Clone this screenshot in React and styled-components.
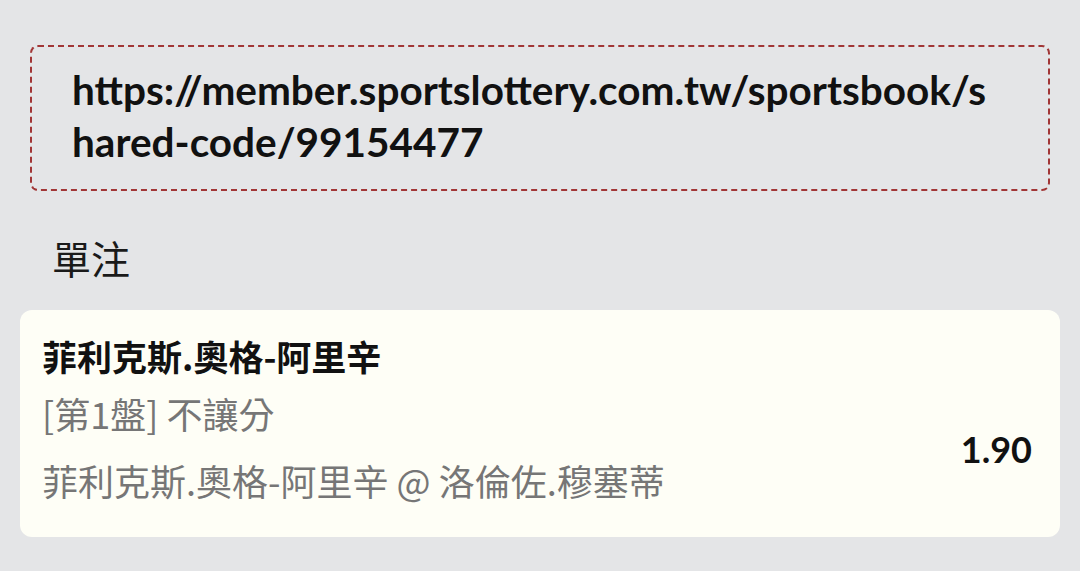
import React from 'react'
import styled, { createGlobalStyle } from 'styled-components'

const GlobalStyle = createGlobalStyle`
  html, body {
    margin: 0;
    padding: 0;
    background: #e4e5e7;
  }
  body {
    font-family: Lato, "Noto Sans CJK TC", sans-serif;
  }
`

const Page = styled.div`
  width: 1080px;
  height: 571px;
  box-sizing: border-box;
  padding: 45px 20px 0 20px;
  overflow: hidden;
`

const LinkBox = styled.div`
  margin: 0 10px;
  height: 146px;
  box-sizing: border-box;
  border: 2px dashed #a13636;
  border-radius: 8px;
  padding: 17px 56px 0 40px;
  font-family: Lato, sans-serif;
  font-weight: 700;
  font-size: 40.5px;
  line-height: 52px;
  color: #111;
  word-break: break-all;
`

const SectionTitle = styled.div`
  margin: 40px 0 0 32px;
  font-family: "Noto Sans CJK TC", sans-serif;
  font-size: 39px;
  line-height: 52px;
  color: #1a1a1a;
`

const Card = styled.div`
  margin-top: 27px;
  height: 227px;
  box-sizing: border-box;
  background: #fefef6;
  border-radius: 12px;
  padding: 21px 28px 0 22px;
  display: flex;
  align-items: flex-start;
`

const Info = styled.div`
  flex: 1;
  display: flex;
  flex-direction: column;
`

const Line = styled.div`
  font-family: "Noto Sans CJK TC", sans-serif;
  font-size: ${p => (p.strong ? 35 : 36)}px;
  line-height: 50px;
  margin-bottom: ${p => p.gap || 0}px;
  color: ${p => (p.strong ? '#111' : '#767676')};
  font-weight: ${p => (p.strong ? 700 : 400)};
`

const Odds = styled.div`
  font-family: Lato, sans-serif;
  font-weight: 700;
  font-size: 36px;
  line-height: 50px;
  color: #111;
  margin-top: 93px;
`

export default function App() {
  return (
    <Page>
      <GlobalStyle />
      <LinkBox>https://member.sportslottery.com.tw/sportsbook/shared-code/99154477</LinkBox>
      <SectionTitle>單注</SectionTitle>
      <Card>
        <Info>
          <Line strong gap={7}>菲利克斯.奧格-阿里辛</Line>
          <Line gap={17}>[第1盤] 不讓分</Line>
          <Line>菲利克斯.奧格-阿里辛 @ 洛倫佐.穆塞蒂</Line>
        </Info>
        <Odds>1.90</Odds>
      </Card>
    </Page>
  )
}
